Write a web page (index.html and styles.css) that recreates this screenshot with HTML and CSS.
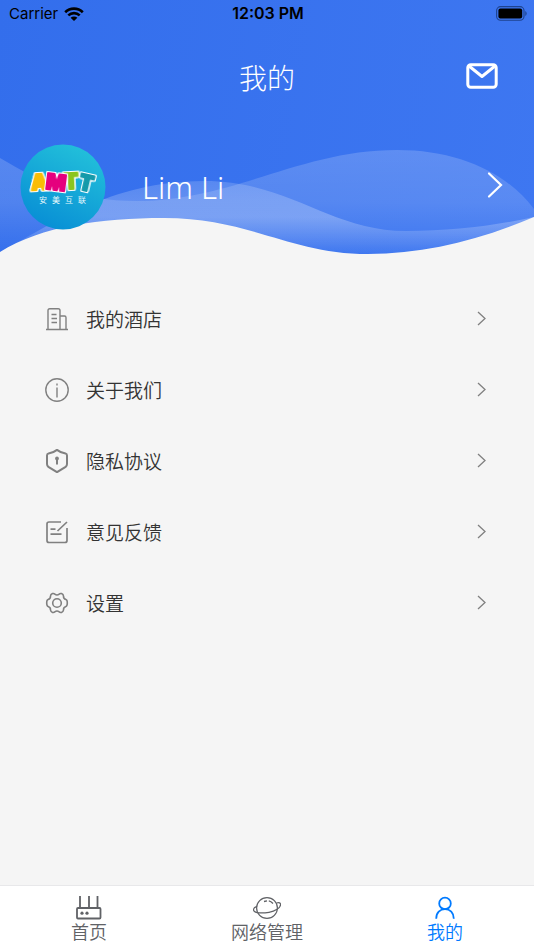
FILE: index.html
```html
<!DOCTYPE html>
<html lang="zh-CN">
<head>
<meta charset="utf-8">
<meta name="viewport" content="width=device-width, initial-scale=1">
<title>我的</title>
<link rel="stylesheet" href="styles.css">
</head>
<body>
<div class="app">
  <header class="hero">
    <svg class="waves" viewBox="0 0 534 256" preserveAspectRatio="none" aria-hidden="true">
      <defs>
        <linearGradient id="back" gradientUnits="userSpaceOnUse" x1="0" y1="150" x2="0" y2="254">
          <stop offset="0" stop-color="#fff" stop-opacity=".18"/>
          <stop offset=".5" stop-color="#fff" stop-opacity=".14"/>
          <stop offset="1" stop-color="#fff" stop-opacity="0"/>
        </linearGradient>
        <linearGradient id="front" gradientUnits="userSpaceOnUse" x1="0" y1="180" x2="0" y2="254">
          <stop offset="0" stop-color="#fff" stop-opacity=".16"/>
          <stop offset=".5" stop-color="#fff" stop-opacity=".26"/>
          <stop offset="1" stop-color="#fff" stop-opacity=".02"/>
        </linearGradient>
      </defs>
      <path fill="url(#back)" d="M0 158C42 183 80 201 136 201C232 201 300 150 397 150C460 150 508 174 534 209V256H0Z"/>
      <path fill="url(#front)" d="M0 252C50 226 110 181 204 181C290 181 330 231 406 231C452 231 494 226 534 217V256H0Z"/>
      <path fill="#f5f5f5" d="M0 252C42 226 100 218 164 218C250 218 290 254 368 254C425 254 480 240 534 217V256H0Z"/>
    </svg>
    <div class="status">
      <div class="carrier">
        <span>Carrier</span>
        <svg width="20" height="14" viewBox="0 0 20 14" aria-hidden="true">
          <g fill="none" stroke="#000" stroke-width="2.6"><path d="M1.2 5.2A12.6 12.6 0 0 1 18.8 5.2"/><path d="M4.3 8.4A8.2 8.2 0 0 1 15.7 8.4"/></g>
          <path d="M6.6 10.8A4.9 4.9 0 0 1 13.4 10.8L10 14Z"/>
        </svg>
      </div>
      <span class="time">12:03 PM</span>
      <svg class="battery" width="31" height="15" viewBox="0 0 31 15" aria-hidden="true">
        <rect x=".6" y=".6" width="27.4" height="13.6" rx="4" fill="none" stroke="#1e438f" stroke-width="1.1"/>
        <rect x="2.4" y="2.4" width="23.8" height="10" rx="2"/>
        <path d="M29.3 5A3 3 0 0 1 29.3 10Z" fill="#1e438f"/>
      </svg>
    </div>
    <div class="titlebar">
      <h1>我的</h1>
      <button class="mail" type="button" aria-label="消息">
        <svg width="32" height="26" viewBox="0 0 32 26" fill="none" stroke="#fff" stroke-width="3" stroke-linejoin="round">
          <rect x="1.8" y="1.8" width="28.4" height="22.4" rx="3"/><path d="M3 3L16 13.5L29 3"/>
        </svg>
      </button>
    </div>
    <a class="profile" href="#profile">
      <svg class="avatar" viewBox="0 0 86 86" role="img" aria-label="安美互联">
        <defs><linearGradient id="disc" x1=".25" y1="1" x2=".75" y2="0"><stop offset="0" stop-color="#078dd5"/><stop offset="1" stop-color="#23c1da"/></linearGradient></defs>
        <circle cx="43" cy="43" r="42.5" fill="url(#disc)"/>
        <g class="logo">
          <text x="11" y="46" fill="#f9bd05" stroke="#f9bd05" transform="rotate(-3 18 40)">A</text>
          <text x="59" y="46" fill="#159aaa" stroke="#159aaa" transform="rotate(13 63 39)">T</text>
          <text x="44" y="45" fill="#8bc51f" stroke="#8bc51f" transform="rotate(-3 51 38)">T</text>
          <text x="26" y="46" fill="#e5007e" stroke="#e5007e" transform="rotate(7 35 39)">M</text>
        </g>
        <g class="brand" fill="#e7f8fc"><text x="19" y="59">安</text><text x="32" y="59">美</text><text x="45" y="59">互</text><text x="58" y="59">联</text></g>
      </svg>
      <span class="name">Lim Li</span>
      <svg class="more" width="16" height="28" viewBox="0 0 16 28" fill="none" stroke="#fff" stroke-width="2.2" stroke-linecap="round" aria-hidden="true"><path d="M2 2.5L14 14L2 25.5"/></svg>
    </a>
  </header>

  <main>
    <nav class="menu" aria-label="菜单">
      <a href="#hotel">
        <svg class="icon" viewBox="0 0 24 24"><path d="M1 22.5H23M3 22V3.5Q3 1.7 4.8 1.7H13.2Q15 1.7 15 3.5V22M15 9H19.5Q21 9 21 10.5V22M6.5 7.5H11.5M6.5 11.5H12M6.5 15.5H12"/></svg>
        <span>我的酒店</span><svg class="arrow" viewBox="0 0 9 15"><path d="M1 1L8 7.5L1 14"/></svg>
      </a>
      <a href="#about">
        <svg class="icon" viewBox="0 0 24 24"><circle cx="12" cy="12" r="11.2"/><path d="M12 9.5V19.5M12 5.5V7.5"/></svg>
        <span>关于我们</span><svg class="arrow" viewBox="0 0 9 15"><path d="M1 1L8 7.5L1 14"/></svg>
      </a>
      <a href="#privacy">
        <svg class="icon" viewBox="0 0 24 24"><path stroke-width="2" d="M12 .9Q16 4 20.5 4.6Q22 4.8 22 6.5V15Q22 16.8 20.6 17.9L12 23.2L3.4 17.9Q2 16.8 2 15V6.5Q2 4.8 3.5 4.6Q8 4 12 .9Z"/><circle cx="12" cy="9.5" r="1.2" fill="#808080"/><path stroke-width="2" d="M12 10V15.5"/></svg>
        <span>隐私协议</span><svg class="arrow" viewBox="0 0 9 15"><path d="M1 1L8 7.5L1 14"/></svg>
      </a>
      <a href="#feedback">
        <svg class="icon" viewBox="0 0 24 24"><path stroke-width="1.7" d="M16 2H4Q2 2 2 4V20.5Q2 22.5 4 22.5H20Q22 22.5 22 20.5V8M22 2L12.5 11M5.5 9.2H10.5M5.5 14.2H16.5"/></svg>
        <span>意见反馈</span><svg class="arrow" viewBox="0 0 9 15"><path d="M1 1L8 7.5L1 14"/></svg>
      </a>
      <a href="#settings">
        <svg class="icon" viewBox="0 0 24 24"><path stroke-width="1.6" stroke-linejoin="round" d="M7.5 2.6Q9 2.2 9.8 3.2Q12 4.8 14.2 3.2Q15 2.2 16.5 2.6Q18.4 3.4 18.5 5Q18.3 7.8 20.9 8.6Q22.3 9 22.3 12Q22.3 15 20.9 15.4Q18.3 16.2 18.5 19Q18.4 20.6 16.5 21.4Q15 21.8 14.2 20.8Q12 19.2 9.8 20.8Q9 21.8 7.5 21.4Q5.6 20.6 5.5 19Q5.7 16.2 3.1 15.4Q1.7 15 1.7 12Q1.7 9 3.1 8.6Q5.7 7.8 5.5 5Q5.6 3.4 7.5 2.6Z"/><circle cx="12" cy="12" r="4.3" stroke-width="1.6"/></svg>
        <span>设置</span><svg class="arrow" viewBox="0 0 9 15"><path d="M1 1L8 7.5L1 14"/></svg>
      </a>
    </nav>
  </main>

  <nav class="tabs" aria-label="主导航">
    <a href="#home">
      <svg width="28" height="24" viewBox="0 0 28 24"><path stroke-width="1.8" d="M5 0V12M14 0V12M22.5 0V12"/><rect x="2" y="12" width="23.5" height="10.5" rx="1" stroke-width="1.8"/><circle cx="7" cy="17.2" r="1.6" fill="currentColor" stroke="none"/><circle cx="12" cy="17.2" r="1.6" fill="currentColor" stroke="none"/></svg>
      <span>首页</span>
    </a>
    <a href="#network">
      <svg width="28" height="24" viewBox="0 0 28 24"><circle cx="14" cy="12" r="10.4"/><path stroke-width="1.2" d="M23.5 7Q27.6 6 27.6 8.6C27.6 12 22 15.3 16 16.3C9.5 17.3.5 17.5.5 13.8Q.5 11.6 4 10.2"/><path stroke-width="1.3" d="M11 5.5L14 4.8M15.8 4.8Q18 5.2 20 7.5"/></svg>
      <span>网络管理</span>
    </a>
    <a class="active" href="#mine" aria-current="page">
      <svg width="28" height="24" viewBox="0 0 28 24"><circle cx="14" cy="7.4" r="5.8" stroke-width="1.8"/><path stroke-width="1.8" d="M5.2 22.8C5.2 16.7 9 13.2 14 13.2S22.8 16.7 22.8 22.8"/></svg>
      <span>我的</span>
    </a>
  </nav>
</div>
</body>
</html>
```
FILE: styles.css
```css
* {
  box-sizing: border-box;
}

body {
  margin: 0;
  background: #f5f5f5;
  color: #333;
  font-family: "Noto Sans CJK SC", sans-serif;
}

a {
  color: inherit;
  text-decoration: none;
}

svg {
  display: block;
  flex: none;
}

.app {
  display: flex;
  flex-direction: column;
  min-height: 100vh;
}

.hero {
  position: relative;
  padding-bottom: 24px;
  background: linear-gradient(100deg, #336eec, #3e77f1);
  color: #fff;
}

.waves {
  position: absolute;
  inset: 0;
  width: 100%;
  height: 100%;
}

.status,
.titlebar,
.profile {
  position: relative;
  display: grid;
  align-items: center;
}

.status {
  grid-template-columns: 1fr auto 1fr;
  height: 27px;
  padding: 0 7px 0 9px;
  color: #000;
  font: 15px/27px Inter, sans-serif;
}

.carrier {
  display: flex;
  align-items: center;
  gap: 6px;
}

.time {
  font-size: 16px;
  font-weight: 600;
}

.battery {
  justify-self: end;
}

.titlebar {
  grid-template-columns: 1fr auto 1fr;
  height: 97px;
  padding: 0 36px;
}

h1 {
  grid-column: 2;
  margin: 0;
  padding-top: 2px;
  font-size: 28px;
  font-weight: 300;
  line-height: 40px;
}

.mail {
  justify-self: end;
  padding: 0;
  border: 0;
  background: none;
}

.profile {
  grid-template-columns: 86px 1fr auto;
  column-gap: 36px;
  height: 108px;
  padding: 20px 31px 2px 20px;
}

.avatar {
  width: 86px;
  height: 86px;
}

.logo {
  font: 900 21px Inter, sans-serif;
  stroke-width: 2;
  stroke-linejoin: round;
}

.logo text {
  filter: drop-shadow(1px 0 0 #fff) drop-shadow(-1px 0 0 #fff) drop-shadow(0 1px 0 #fff) drop-shadow(0 -1px 0 #fff);
}

.brand {
  font-size: 8px;
}

.name {
  font: 300 31px/40px "Noto Sans", "Open Sans", sans-serif;
}

.more {
  margin-bottom: 4px;
}

main {
  flex: 1;
}

.menu {
  padding: 27px 48px 27px 45px;
}

.menu a {
  display: grid;
  grid-template-columns: 24px 1fr 9px;
  column-gap: 17px;
  align-items: center;
  height: 71px;
  font-size: 19px;
  font-weight: 350;
  line-height: 28px;
}

.icon {
  width: 24px;
  height: 24px;
  fill: none;
  stroke: #808080;
  stroke-width: 1.4;
}

.arrow {
  width: 9px;
  height: 15px;
  fill: none;
  stroke: #808080;
  stroke-width: 1.3;
}

.tabs {
  display: grid;
  grid-template-columns: repeat(3, 1fr);
  height: 65px;
  border-top: 1px solid #e8e8ea;
  background: #fff;
  color: #606266;
}

.tabs a {
  display: flex;
  flex-direction: column;
  align-items: center;
  padding-top: 10px;
  font-size: 18px;
  font-weight: 350;
  line-height: 22px;
}

.tabs svg {
  fill: none;
  stroke: currentColor;
  stroke-width: 1.2;
}

.tabs .active {
  color: #007aff;
}
```
